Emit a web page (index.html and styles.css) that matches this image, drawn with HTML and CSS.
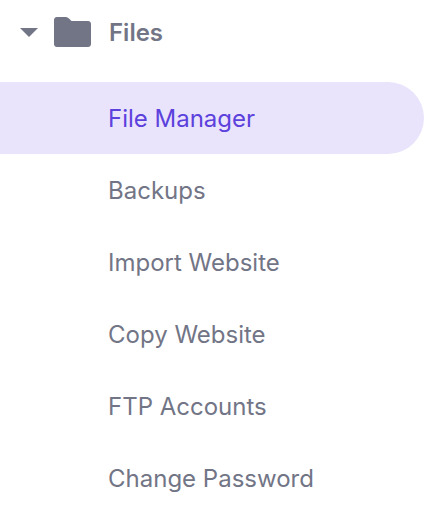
FILE: index.html
```html
<!DOCTYPE html>
<html lang="en">
<head>
    <meta charset="UTF-8">
    <title>Files</title>
    <link rel="stylesheet" href="styles.css">
</head>
<body>
    <div class="sidebar">
        <div class="group-header">
            <svg class="caret" width="18" height="9" viewBox="0 0 18 9"><path d="M0 0H18L9 9Z" fill="#727586"/></svg>
            <svg class="folder" width="37" height="30" viewBox="0 0 37 30"><path d="M3 0H12C13 0 14 .5 15 1.500L17.500 4H34C35.700 4 37 5.300 37 7V27C37 28.700 35.700 30 34 30H3C1.300 30 0 28.700 0 27V3C0 1.300 1.300 0 3 0Z" fill="#727586"/></svg>
            <span class="group-title">Files</span>
        </div>
        <ul class="menu">
            <li class="menu-item active">File Manager</li>
            <li class="menu-item">Backups</li>
            <li class="menu-item">Import Website</li>
            <li class="menu-item">Copy Website</li>
            <li class="menu-item">FTP Accounts</li>
            <li class="menu-item">Change Password</li>
        </ul>
    </div>
</body>
</html>
```

FILE: styles.css
```css
* {
    margin: 0;
    padding: 0;
    box-sizing: border-box;
}

body {
    background: #fff;
    font-family: Inter, "Liberation Sans", sans-serif;
}

.sidebar {
    width: 424px;
}

.group-header {
    display: flex;
    align-items: center;
    height: 64px;
    padding-left: 20px;
}

.folder {
    margin-left: 16px;
}

.group-title {
    margin-left: 18px;
    font-size: 24px;
    font-weight: 600;
    color: #727586;
}

.menu {
    list-style: none;
    margin-top: 18px;
}

.menu-item {
    height: 72px;
    line-height: 74px;
    padding-left: 108px;
    font-size: 24px;
    color: #727586;
}

.menu-item.active {
    background: #e9e4fc;
    color: #5c41dc;
    border-radius: 0 36px 36px 0;
}
```
